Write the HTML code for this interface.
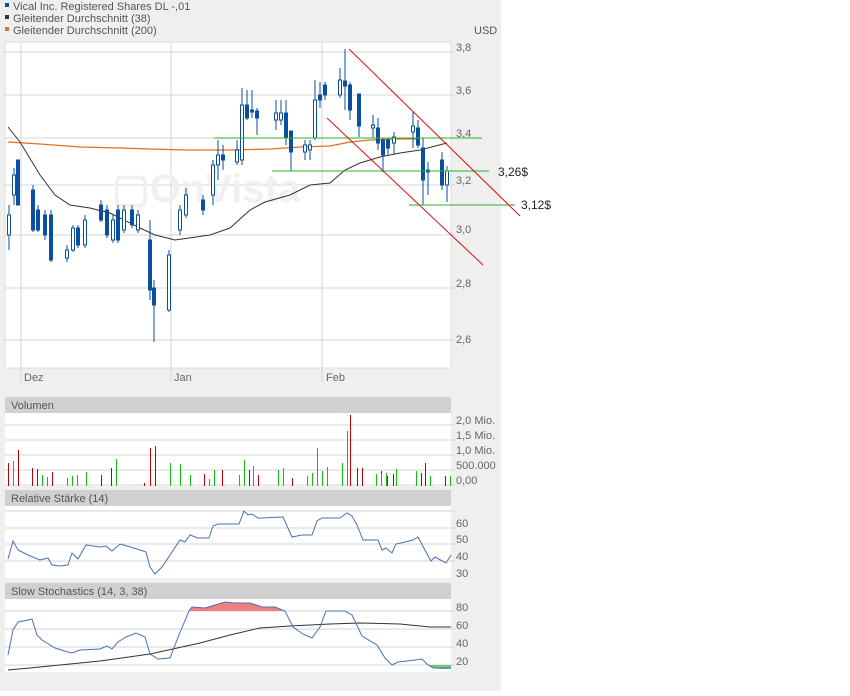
<!DOCTYPE html>
<html><head><meta charset="utf-8"><style>
body{margin:0;width:850px;height:691px;background:#fff;font-family:"Liberation Sans",sans-serif;overflow:hidden}
</style></head><body>
<svg width="850" height="691" xmlns="http://www.w3.org/2000/svg" font-family="Liberation Sans, sans-serif">
<rect x="0" y="0" width="501" height="691" fill="#efefef"/>
<g font-size="11" fill="#555">
<rect x="5" y="3" width="4" height="4" fill="#0a4f9e"/><text x="13" y="10">Vical Inc. Registered Shares DL -,01</text>
<rect x="5" y="15" width="4" height="4" fill="#333"/><text x="13" y="22">Gleitender Durchschnitt (38)</text>
<rect x="5" y="27" width="4" height="4" fill="#e07020"/><text x="13" y="34">Gleitender Durchschnitt (200)</text>
<text x="474" y="34">USD</text>
</g>
<rect x="5" y="42" width="446" height="326" fill="#fff" stroke="#ddd"/>
<g stroke="#d4d4d4" stroke-width="1">
<line x1="5" y1="52" x2="455" y2="52"/><line x1="5" y1="95" x2="455" y2="95"/><line x1="5" y1="138" x2="455" y2="138"/><line x1="5" y1="185" x2="455" y2="185"/><line x1="5" y1="235" x2="455" y2="235"/><line x1="5" y1="288" x2="455" y2="288"/><line x1="5" y1="340" x2="455" y2="340"/>
<line x1="21" y1="42" x2="21" y2="382"/><line x1="171" y1="42" x2="171" y2="382"/><line x1="322" y1="42" x2="322" y2="382"/>
</g>
<g font-size="11" fill="#666">
<text x="456" y="51">3,8</text><text x="456" y="94">3,6</text><text x="456" y="137">3,4</text><text x="456" y="184">3,2</text><text x="456" y="233">3,0</text><text x="456" y="287">2,8</text><text x="456" y="343">2,6</text>
<text x="24" y="381">Dez</text><text x="174" y="381">Jan</text><text x="326" y="381">Feb</text>
</g>
<text x="112" y="202" font-size="40" font-weight="bold" fill="#f0f0f0">▢OnVista</text>
<polyline fill="none" stroke="#e07020" stroke-width="1.2" points="8,142 40,144 80,147 120,148 150,149 185,150 230,150 270,149 300,147 330,146 350,142 370,140 400,139 420,139"/>
<polyline fill="none" stroke="#333" stroke-width="1" points="8,127 20,142 40,175 55,195 70,205 90,208 110,213 140,228 155,235 175,240 210,235 230,228 250,210 265,202 290,195 310,185 330,183 345,170 360,163 380,157 400,153 420,150 447,143"/>
<g stroke="#0a4f9e" fill="#0a4f9e" stroke-width="1">
<line x1="9" y1="205" x2="9" y2="250"/><rect x="7.5" y="215" width="3" height="20" fill="#fff"/>
<line x1="14" y1="168" x2="14" y2="205"/><rect x="12.5" y="175" width="3" height="20" fill="#fff"/>
<line x1="18" y1="160" x2="18" y2="205"/><rect x="16.5" y="160" width="3" height="45"/>
<line x1="33" y1="185" x2="33" y2="232"/><rect x="31.5" y="190" width="3" height="40"/>
<line x1="38" y1="205" x2="38" y2="232"/><rect x="36.5" y="210" width="3" height="20"/>
<line x1="45" y1="210" x2="45" y2="240"/><rect x="43.5" y="215" width="3" height="20"/>
<line x1="51" y1="210" x2="51" y2="262"/><rect x="49.5" y="215" width="3" height="45"/>
<line x1="67" y1="245" x2="67" y2="262"/><rect x="65.5" y="250" width="3" height="8" fill="#fff"/>
<line x1="73" y1="225" x2="73" y2="252"/><rect x="71.5" y="228" width="3" height="22" fill="#fff"/>
<line x1="78" y1="225" x2="78" y2="248"/><rect x="76.5" y="228" width="3" height="17"/>
<line x1="85" y1="215" x2="85" y2="248"/><rect x="83.5" y="220" width="3" height="25" fill="#fff"/>
<line x1="101" y1="200" x2="101" y2="222"/><rect x="99.5" y="205" width="3" height="15"/>
<line x1="107" y1="205" x2="107" y2="238"/><rect x="105.5" y="210" width="3" height="25"/>
<line x1="113" y1="215" x2="113" y2="243"/><rect x="111.5" y="220" width="3" height="20" fill="#fff"/>
<line x1="118" y1="205" x2="118" y2="243"/><rect x="116.5" y="210" width="3" height="30"/>
<line x1="124" y1="205" x2="124" y2="233"/><rect x="122.5" y="210" width="3" height="20" fill="#fff"/>
<line x1="132" y1="205" x2="132" y2="228"/><rect x="130.5" y="210" width="3" height="15"/>
<line x1="138" y1="210" x2="138" y2="233"/><rect x="136.5" y="215" width="3" height="15" fill="#fff"/>
<line x1="150" y1="220" x2="150" y2="300"/><rect x="148.5" y="240" width="3" height="50"/>
<line x1="154" y1="280" x2="154" y2="342"/><rect x="152.5" y="288" width="3" height="17"/>
<line x1="169" y1="250" x2="169" y2="312"/><rect x="167.5" y="255" width="3" height="55" fill="#fff"/>
<line x1="180" y1="205" x2="180" y2="235"/><rect x="178.5" y="210" width="3" height="20" fill="#fff"/>
<line x1="186" y1="188" x2="186" y2="218"/><rect x="184.5" y="195" width="3" height="20" fill="#fff"/>
<line x1="203" y1="195" x2="203" y2="215"/><rect x="201.5" y="200" width="3" height="10"/>
<line x1="213" y1="160" x2="213" y2="205"/><rect x="211.5" y="165" width="3" height="30" fill="#fff"/>
<line x1="218" y1="140" x2="218" y2="180"/><rect x="216.5" y="155" width="3" height="10" fill="#fff"/>
<line x1="223" y1="145" x2="223" y2="170"/><rect x="221.5" y="155" width="3" height="5"/>
<line x1="237" y1="140" x2="237" y2="165"/><rect x="235.5" y="150" width="3" height="12" fill="#fff"/>
<line x1="242" y1="88" x2="242" y2="165"/><rect x="240.5" y="105" width="3" height="55" fill="#fff"/>
<line x1="247" y1="90" x2="247" y2="120"/><rect x="245.5" y="105" width="3" height="13"/>
<line x1="252" y1="90" x2="252" y2="118"/><rect x="250.5" y="110" width="3" height="2"/>
<line x1="257" y1="108" x2="257" y2="135"/><rect x="255.5" y="111" width="3" height="7"/>
<line x1="276" y1="100" x2="276" y2="130"/><rect x="274.5" y="113" width="3" height="7" fill="#fff"/>
<line x1="281" y1="100" x2="281" y2="125"/><rect x="279.5" y="113" width="3" height="7" fill="#fff"/>
<line x1="286" y1="100" x2="286" y2="145"/><rect x="284.5" y="113" width="3" height="25"/>
<line x1="291" y1="131" x2="291" y2="171"/><rect x="289.5" y="131" width="3" height="21"/>
<line x1="305" y1="140" x2="305" y2="160"/><rect x="303.5" y="145" width="3" height="7" fill="#fff"/>
<line x1="310" y1="140" x2="310" y2="160"/><rect x="308.5" y="145" width="3" height="5" fill="#fff"/>
<line x1="315" y1="80" x2="315" y2="140"/><rect x="313.5" y="100" width="3" height="38" fill="#fff"/>
<line x1="320" y1="82" x2="320" y2="108"/><rect x="318.5" y="95" width="3" height="5"/>
<line x1="325" y1="82" x2="325" y2="100"/><rect x="323.5" y="85" width="3" height="10"/>
<line x1="340" y1="68" x2="340" y2="98"/><rect x="338.5" y="80" width="3" height="15" fill="#fff"/>
<line x1="345" y1="49" x2="345" y2="110"/><rect x="343.5" y="81" width="3" height="5"/>
<line x1="350" y1="82" x2="350" y2="120"/><rect x="348.5" y="85" width="3" height="25"/>
<line x1="359" y1="94" x2="359" y2="137"/><rect x="357.5" y="94" width="3" height="32"/>
<line x1="373" y1="115" x2="373" y2="138"/><rect x="371.5" y="125" width="3" height="3" fill="#fff"/>
<line x1="378" y1="118" x2="378" y2="150"/><rect x="376.5" y="128" width="3" height="15"/>
<line x1="383" y1="138" x2="383" y2="172"/><rect x="381.5" y="140" width="3" height="15"/>
<line x1="388" y1="138" x2="388" y2="155"/><rect x="386.5" y="140" width="3" height="8"/>
<line x1="394" y1="132" x2="394" y2="155"/><rect x="392.5" y="137" width="3" height="6" fill="#fff"/>
<line x1="413" y1="112" x2="413" y2="148"/><rect x="411.5" y="126" width="3" height="6" fill="#fff"/>
<line x1="418" y1="120" x2="418" y2="148"/><rect x="416.5" y="128" width="3" height="17"/>
<line x1="423" y1="138" x2="423" y2="205"/><rect x="421.5" y="148" width="3" height="32"/>
<line x1="428" y1="162" x2="428" y2="195"/><rect x="426.5" y="170" width="3" height="2"/>
<line x1="442" y1="152" x2="442" y2="190"/><rect x="440.5" y="160" width="3" height="25"/>
<line x1="447" y1="166" x2="447" y2="202"/><rect x="445.5" y="171" width="3" height="14" fill="#fff"/>
</g>
<g stroke-width="1">
<line x1="214" y1="138" x2="482" y2="138" stroke="#2bb02b"/>
<line x1="272" y1="171" x2="489" y2="171" stroke="#2bb02b"/>
<line x1="409" y1="205" x2="515" y2="205" stroke="#2bb02b"/>
<line x1="349" y1="49" x2="520" y2="216" stroke="#e01010"/>
<line x1="327" y1="118" x2="483" y2="265" stroke="#e01010"/>
</g>
<g font-size="12" fill="#222"><text x="498" y="176">3,26$</text><text x="521" y="209">3,12$</text></g>

<rect x="5" y="397" width="446" height="16" fill="#d0d0d0"/>
<text x="11" y="409" font-size="11" fill="#555">Volumen</text>
<rect x="5" y="413" width="446" height="73" fill="#fff"/>
<g stroke="#d4d4d4"><line x1="5" y1="425" x2="455" y2="425"/><line x1="5" y1="440" x2="455" y2="440"/><line x1="5" y1="455" x2="455" y2="455"/><line x1="5" y1="470" x2="455" y2="470"/><line x1="5" y1="485" x2="455" y2="485"/></g>
<g font-size="11" fill="#666"><text x="456" y="424">2,0 Mio.</text><text x="456" y="439">1,5 Mio.</text><text x="456" y="454">1,0 Mio.</text><text x="456" y="469">500.000</text><text x="456" y="484">0,00</text></g>
<g stroke-width="1">
<path stroke="#c00000" d="M8.5 463V486M18.5 450V486M32.5 468V486M37.5 469V486M52.5 472V486M101.5 475V486M111.5 468V486M144.5 483V486M150.5 448V486M155.5 446V486M204.5 474V486M222.5 470V486M249.5 470V486M258.5 475V486M292.5 478V486M350.5 415V486M357.5 468V486M362.5 468V486M381.5 471V486M387.5 476V486M393.5 474V486M421.5 473V486M425.5 463V486M445.5 476V486"/>
<path stroke="#10c010" d="M13.5 461V486M42.5 475V486M47.5 477V486M67.5 478V486M72.5 476V486M77.5 475V486M86.5 472V486M116.5 459V486M170.5 463V486M180.5 464V486M190.5 475V486M209.5 479V486M214.5 470V486M239.5 475V486M244.5 460V486M253.5 466V486M278.5 470V486M283.5 468V486M307.5 476V486M312.5 473V486M317.5 448V486M322.5 471V486M327.5 467V486M342.5 463V486M347.5 431V486M376.5 474V486M381.5 474V486M386.5 473V486M396.5 469V486M416.5 471V486M430.5 476V486M450.5 476V486"/>
</g>

<rect x="5" y="490" width="446" height="16" fill="#d0d0d0"/>
<text x="11" y="502" font-size="11" fill="#555">Relative Stärke (14)</text>
<rect x="5" y="506" width="446" height="72" fill="#fff"/>
<g stroke="#d4d4d4"><line x1="5" y1="511" x2="455" y2="511"/><line x1="5" y1="528" x2="455" y2="528"/><line x1="5" y1="544" x2="455" y2="544"/><line x1="5" y1="561" x2="455" y2="561"/></g>
<g font-size="11" fill="#666"><text x="456" y="527">60</text><text x="456" y="543">50</text><text x="456" y="560">40</text><text x="456" y="577">30</text></g>
<polyline fill="none" stroke="#4a6fb5" stroke-width="1" points="8,559 13,541 18,550 28,555 40,560 48,558 52,565 60,566 68,565 72,553 78,559 86,545 100,547 106,546 112,551 120,544 127,546 140,550 146,552 150,567 155,574 162,567 172,552 180,540 185,542 190,535 198,538 209,538 213,526 218,524 230,524 239,524 244,511 248,515 252,514 258,518 262,518 283,517 292,537 302,535 312,535 317,521 322,518 340,518 347,513 352,516 357,525 363,540 378,540 382,550 386,548 392,553 396,544 405,542 413,540 418,537 426,552 431,561 435,557 446,563 451,555"/>

<rect x="5" y="583" width="446" height="16" fill="#d0d0d0"/>
<text x="11" y="595" font-size="11" fill="#555">Slow Stochastics (14, 3, 38)</text>
<rect x="5" y="599" width="446" height="73" fill="#fff"/>
<g stroke="#d4d4d4"><line x1="5" y1="611" x2="455" y2="611"/><line x1="5" y1="629" x2="455" y2="629"/><line x1="5" y1="647" x2="455" y2="647"/><line x1="5" y1="665" x2="455" y2="665"/></g>
<g font-size="11" fill="#666"><text x="456" y="611">80</text><text x="456" y="629">60</text><text x="456" y="647">40</text><text x="456" y="665">20</text></g>
<path fill="#f08080" d="M189 611L192 607 205 608 215 605 225 602 235 603 250 603 262 607 275 607 285 611Z"/>
<path fill="#70d070" d="M428 665L435 665 451 665 451 669 440 669 432 668Z"/>
<polyline fill="none" stroke="#333" stroke-width="1" points="8,670 30,668 60,665 100,661 150,654 200,643 230,635 260,628 290,626 330,624 360,623 400,624 430,627 451,627"/>
<polyline fill="none" stroke="#4a6fb5" stroke-width="1" points="8,655 13,630 18,622 28,620 32,619 37,635 42,640 50,645 55,648 68,652 72,653 80,650 100,649 107,646 112,649 118,642 126,637 136,633 145,637 150,654 158,659 170,658 175,645 181,630 189,611 192,607 205,608 215,605 225,602 235,603 250,603 262,607 275,607 285,611 293,627 303,634 312,638 320,627 326,611 345,611 352,615 362,636 377,645 385,658 392,665 398,662 415,660 422,659 428,665 434,668 451,668"/>
</svg>
</body></html>
